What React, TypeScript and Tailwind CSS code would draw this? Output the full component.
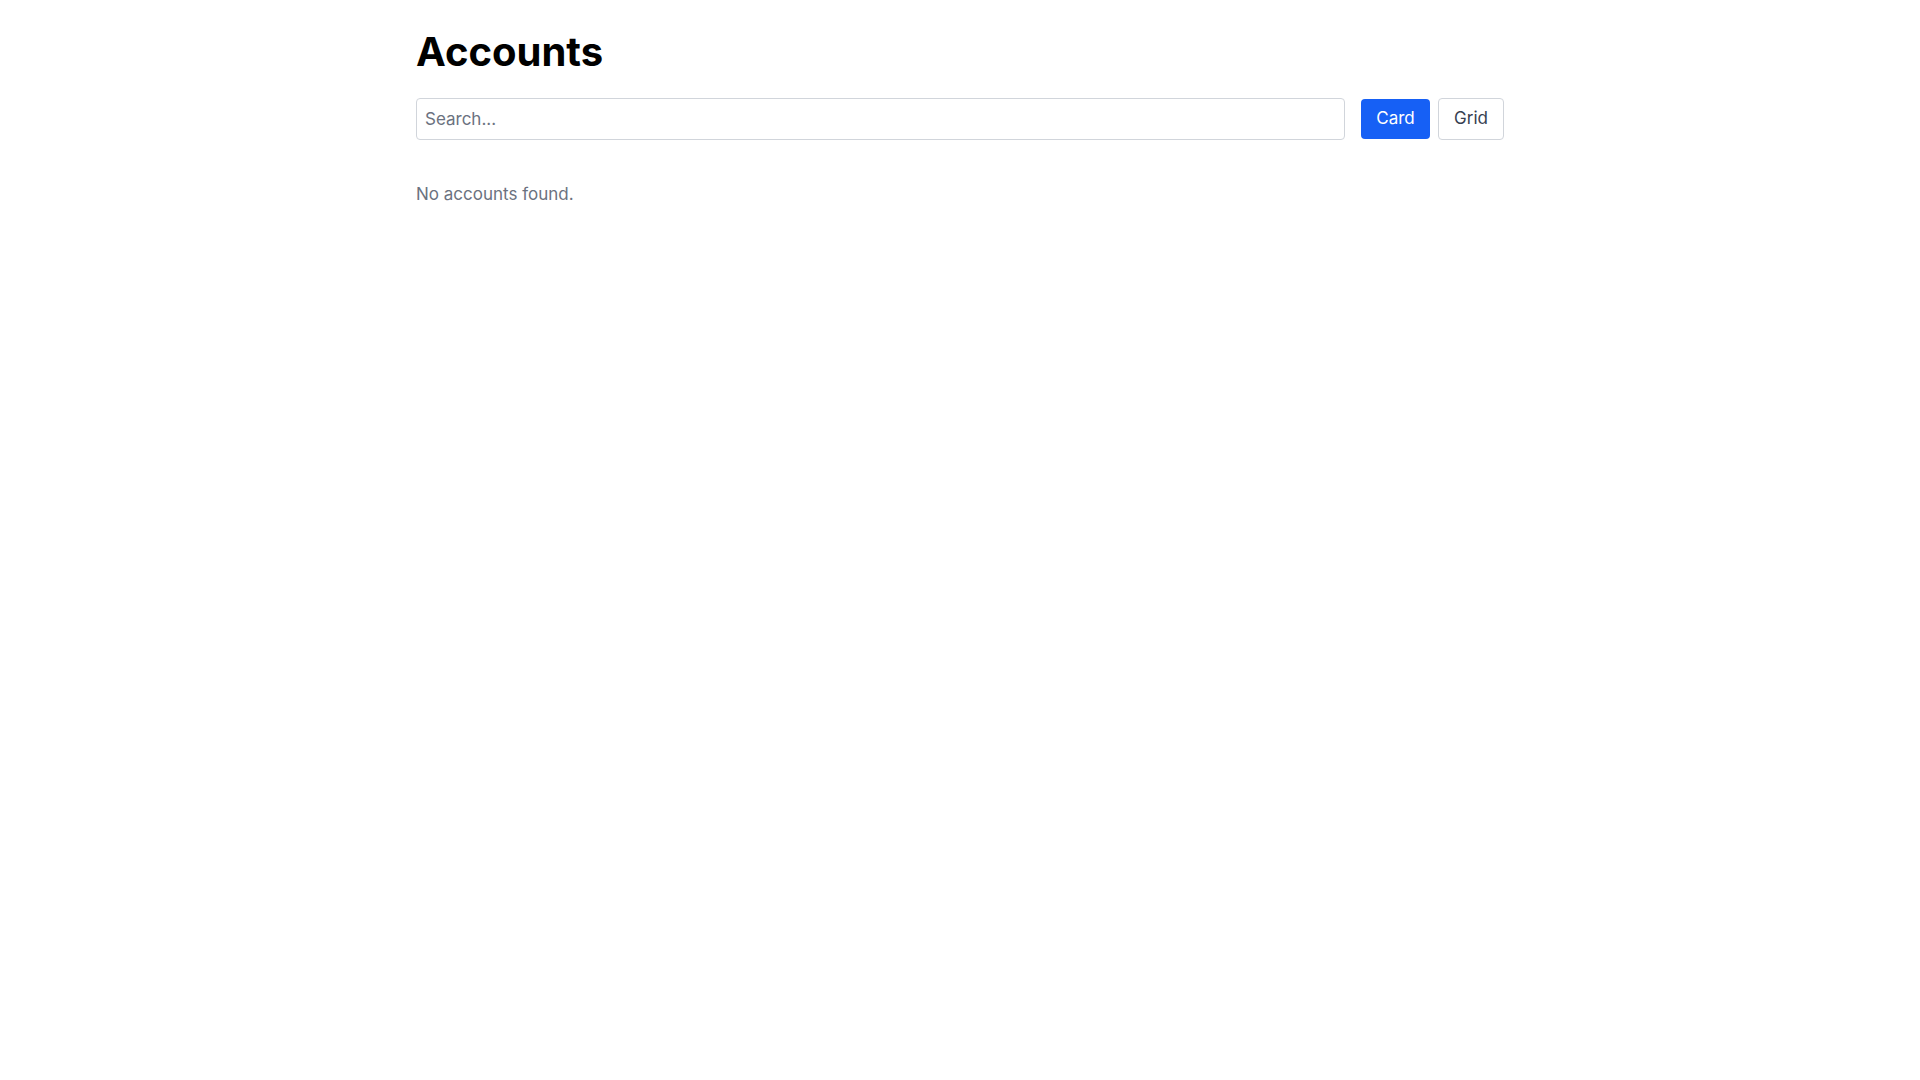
export default function App() {
  return (
    <div className="min-h-screen bg-white" style={{ fontFamily: "Inter, 'Noto Sans', sans-serif" }}>
      <div className="mx-auto w-[1088px] pt-[28px]">
        <h1 className="text-[40px] leading-[48px] font-bold text-black">Accounts</h1>
        <div className="mt-[22px] flex items-center">
          <input
            placeholder="Search..."
            className="h-[42px] flex-1 rounded-[4px] border border-[#d1d5db] px-2 text-[17px] text-gray-800 placeholder:text-[#6b7280] outline-none"
          />
          <button className="ml-4 h-[40px] w-[69px] rounded-[4px] bg-[#1660f5] text-[17px] text-white">Card</button>
          <button className="ml-2 h-[42px] w-[66px] rounded-[4px] border border-[#d1d5db] bg-white text-[17px] text-[#374151]">Grid</button>
        </div>
        <p className="mt-[42px] text-[17px] text-[#6b7280]">No accounts found.</p>
      </div>
    </div>
  );
}
